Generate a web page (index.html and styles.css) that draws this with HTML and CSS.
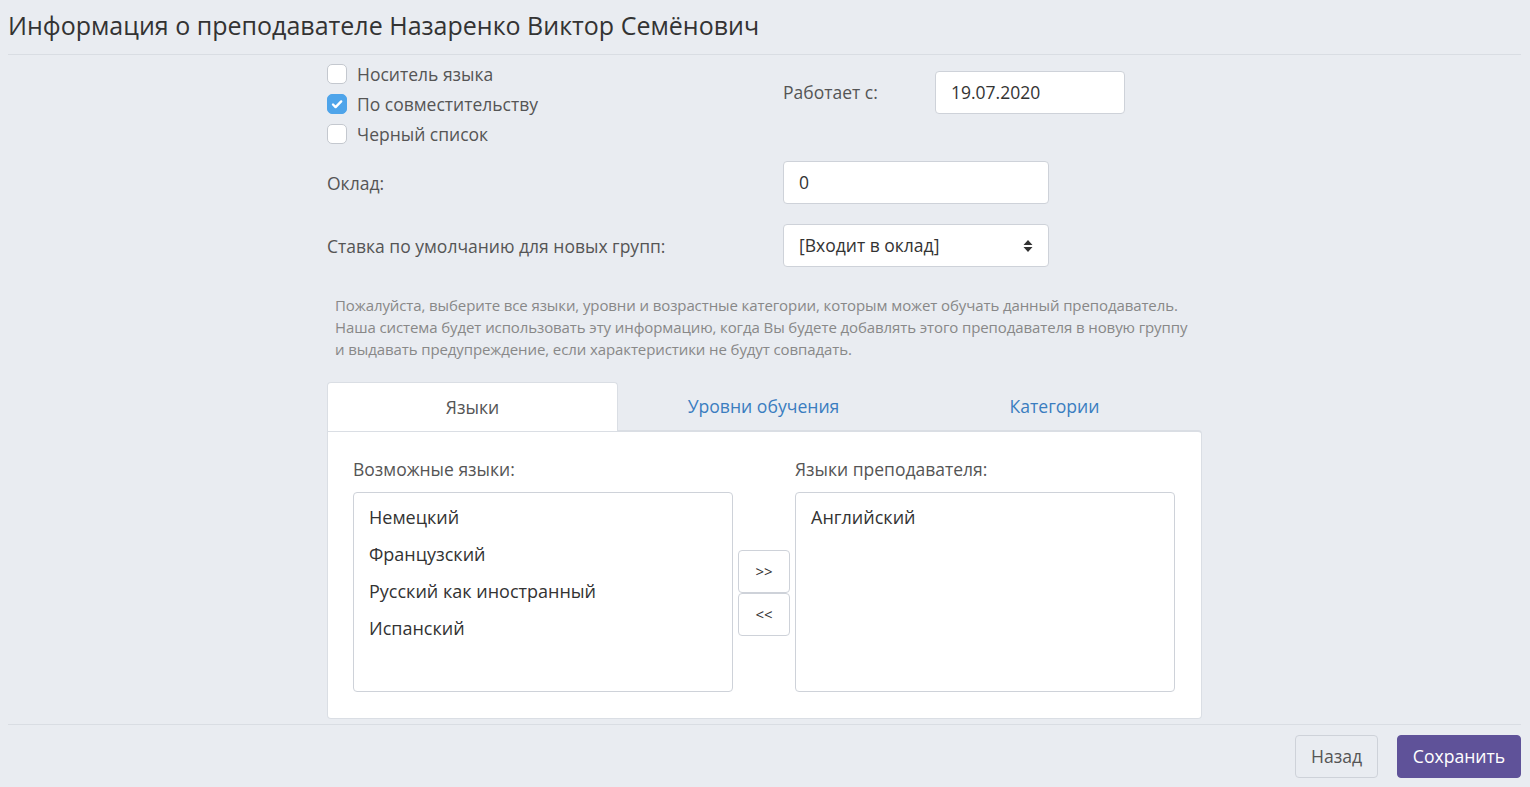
FILE: index.html
```html
<!DOCTYPE html>
<html lang="ru">
<head>
<meta charset="utf-8">
<title>Информация о преподавателе</title>
<link rel="stylesheet" href="styles.css">
</head>
<body>
<div class="page">
  <h1 class="title">Информация о преподавателе Назаренко Виктор Семёнович</h1>
  <div class="content">
    <div class="form">
      <div class="top-row">
        <div class="checks">
          <label class="check"><span class="box"></span>Носитель языка</label>
          <label class="check"><span class="box checked"><svg viewBox="0 0 20 20" width="20" height="20"><path d="M6 10.5l2.6 2.6L14.2 7.4" fill="none" stroke="#fff" stroke-width="2.4" stroke-linecap="round" stroke-linejoin="round"/></svg></span>По совместительству</label>
          <label class="check"><span class="box"></span>Черный список</label>
        </div>
        <div class="works">
          <span class="label works-label">Работает с:</span>
          <div class="input date">19.07.2020</div>
        </div>
      </div>
      <div class="row row-salary">
        <span class="label">Оклад:</span>
        <div class="input wide">0</div>
      </div>
      <div class="row row-rate">
        <span class="label">Ставка по умолчанию для новых групп:</span>
        <div class="input wide select">[Входит в оклад]<svg class="caret" viewBox="0 0 10 14" width="10" height="14"><path d="M5 1L9.5 6H0.5z M5 13L0.5 8H9.5z" fill="#333"/></svg></div>
      </div>
      <p class="help">Пожалуйста, выберите все языки, уровни и возрастные категории, которым может обучать данный преподаватель.<br>Наша система будет использовать эту информацию, когда Вы будете добавлять этого преподавателя в новую группу<br>и выдавать предупреждение, если характеристики не будут совпадать.</p>
      <div class="tabs">
        <div class="tab active">Языки</div>
        <div class="tab">Уровни обучения</div>
        <div class="tab">Категории</div>
      </div>
      <div class="panel">
        <div class="col">
          <div class="col-label">Возможные языки:</div>
          <div class="list">
            <div class="item">Немецкий</div>
            <div class="item">Французский</div>
            <div class="item">Русский как иностранный</div>
            <div class="item">Испанский</div>
          </div>
        </div>
        <div class="moves">
          <div class="move">&gt;&gt;</div>
          <div class="move">&lt;&lt;</div>
        </div>
        <div class="col">
          <div class="col-label">Языки преподавателя:</div>
          <div class="list">
            <div class="item">Английский</div>
          </div>
        </div>
      </div>
    </div>
  </div>
  <div class="footer">
    <div class="btn back">Назад</div>
    <div class="btn save">Сохранить</div>
  </div>
</div>
</body>
</html>
```

FILE: styles.css
```css
* { box-sizing: border-box; }
html, body { margin: 0; padding: 0; }
body {
  background: #e9ecf1;
  font-family: "Open Sans", "Noto Sans", sans-serif;
  color: #555;
  font-size: 17.5px;
  width: 1530px;
  height: 787px;
  overflow: hidden;
}
.page { padding: 0 9px 0 8px; }
.title {
  margin: 0;
  padding: 8px 0 12px 0;
  font-size: 25px;
  font-weight: 400;
  color: #333;
  line-height: 34px;
  border-bottom: 1px solid #d9dde3;
}
.content {
  height: 670px;
  border-bottom: 1px solid #d9dde3;
  padding-left: 319px;
}
.form { width: 875px; }
.top-row { display: flex; padding-top: 4px; }
.checks { width: 456px; display: flex; flex-direction: column; }
.check {
  display: flex;
  align-items: center;
  height: 30px;
  gap: 10px;
  color: #555;
}
.box {
  width: 20px; height: 20px;
  border: 1px solid #c4c8cf;
  border-radius: 5px;
  background: #fff;
  display: flex;
}
.box.checked { background: #4ea4ea; border-color: #4ea4ea; }
.box svg { margin: -1px; }
.works { display: flex; align-items: flex-start; padding-top: 12px; }
.works-label { width: 152px; line-height: 42px; }
.input {
  height: 43px;
  background: #fff;
  border: 1px solid #ced2d9;
  border-radius: 4px;
  line-height: 41px;
  padding: 0 15px;
  color: #333;
}
.date { width: 190px; }
.row { display: flex; align-items: center; }
.row .label { width: 456px; }
.row-salary { margin-top: 12px; }
.row-rate { margin-top: 20px; }
.wide { width: 266px; }
.select { display: flex; justify-content: space-between; align-items: center; line-height: 41px; }
.caret { margin-right: 0; }
.help {
  margin: 27px 0 0 8px;
  font-size: 15px;
  line-height: 22px;
  color: #888;
  letter-spacing: -0.1px;
}
.tabs { display: flex; margin-top: 22px; height: 49px; }
.tab {
  width: 291px;
  text-align: center;
  line-height: 48px;
  color: #3a7dc0;
  font-size: 17.6px;
}
.tab.active {
  background: #fff;
  border: 1px solid #dadee4;
  border-bottom: none;
  border-radius: 4px 4px 0 0;
  color: #555;
}
.panel {
  background: #fff;
  border: 1px solid #dadee4;
  border-top: 2px solid #dadee4;
  border-radius: 0 4px 4px 4px;
  margin-top: -1px;
  height: 289px;
  padding: 25px 26px 0 25px;
  display: flex;
}
.col { width: 380px; }
.col-label { line-height: 24px; margin-bottom: 11px; color: #555; }
.list {
  height: 200px;
  border: 1px solid #ced2d9;
  border-radius: 4px;
  padding: 6px 15px;
  color: #333;
  font-size: 18px;
}
.item { line-height: 37px; }
.moves {
  width: 62px;
  display: flex;
  flex-direction: column;
  align-items: center;
  padding-top: 93px;
  gap: 0;
}
.move {
  width: 52px;
  height: 43px;
  border: 1px solid #ced2d9;
  border-radius: 4px;
  text-align: center;
  line-height: 41px;
  font-size: 15px;
  color: #333;
  background: #fff;
}
.footer {
  display: flex;
  justify-content: flex-end;
  gap: 19px;
  padding-top: 10px;
}
.btn {
  height: 43px;
  line-height: 41px;
  border-radius: 4px;
  font-size: 17.6px;
}
.back { border: 1px solid #ced2d9; color: #555; width: 83px; text-align: center; }
.save { background: #5f5299; color: #fff; border: 1px solid #5f5299; width: 124px; text-align: center; }
```
